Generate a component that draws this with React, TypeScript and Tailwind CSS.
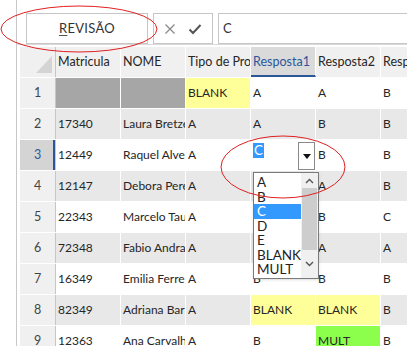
import React from "react";

type Cell = { v: string; bg?: string };

const rows: { n: number; cells: Cell[] }[] = [
  { n: 1, cells: [{ v: "", bg: "bg-[#a6a6a6]" }, { v: "", bg: "bg-[#a6a6a6]" }, { v: "BLANK", bg: "bg-[#ffff99]" }, { v: "A" }, { v: "A" }, { v: "B" }] },
  { n: 2, cells: [{ v: "17340" }, { v: "Laura Bretzel" }, { v: "A" }, { v: "A" }, { v: "B" }, { v: "B" }] },
  { n: 3, cells: [{ v: "12449" }, { v: "Raquel Alves" }, { v: "A" }, { v: "" }, { v: "B" }, { v: "B" }] },
  { n: 4, cells: [{ v: "12147" }, { v: "Debora Pereira" }, { v: "A" }, { v: "A" }, { v: "A" }, { v: "B" }] },
  { n: 5, cells: [{ v: "22343" }, { v: "Marcelo Tauil" }, { v: "A" }, { v: "" }, { v: "B" }, { v: "C" }] },
  { n: 6, cells: [{ v: "72348" }, { v: "Fabio Andrade" }, { v: "A" }, { v: "" }, { v: "A" }, { v: "A" }] },
  { n: 7, cells: [{ v: "16349" }, { v: "Emilia Ferreira" }, { v: "A" }, { v: "B" }, { v: "B" }, { v: "B" }] },
  { n: 8, cells: [{ v: "82349" }, { v: "Adriana Bari" }, { v: "A" }, { v: "BLANK", bg: "bg-[#ffff99]" }, { v: "BLANK", bg: "bg-[#ffff99]" }, { v: "B" }] },
  { n: 9, cells: [{ v: "12363" }, { v: "Ana Carvalho" }, { v: "A" }, { v: "B" }, { v: "MULT", bg: "bg-[#8cff4d]" }, { v: "B" }] },
];

const headers = ["Matricula", "NOME", "Tipo de Prova", "Resposta1", "Resposta2", "Resposta3"];

function Dropdown() {
  const items = ["A", "B", "C", "D", "E", "BLANK", "MULT"];
  return (
    <div className="absolute left-[253px] top-[172px] w-[66px] h-[107px] bg-white border border-[#7a7a7a] flex shadow-sm">
      <div className="flex-1 flex flex-col pt-[2px]">
        {items.map((it) => (
          <div
            key={it}
            className={`h-[14.5px] leading-[14.5px] pl-[3px] text-[13.5px] ${it === "C" ? "bg-[#3399ff] text-white" : "text-[#222]"}`}
          >
            {it}
          </div>
        ))}
      </div>
      <div className="w-[17px] bg-[#f0f0f0] flex flex-col items-center">
        <div className="h-[15px] flex items-center justify-center">
          <svg width="9" height="6" viewBox="0 0 9 6"><path d="M1 5 L4.5 1.5 L8 5" fill="none" stroke="#555" strokeWidth="1.4" /></svg>
        </div>
        <div className="w-[15px] h-[62px] bg-[#cdcdcd]" />
        <div className="flex-1 flex items-center justify-center">
          <svg width="9" height="6" viewBox="0 0 9 6"><path d="M1 1 L4.5 4.5 L8 1" fill="none" stroke="#555" strokeWidth="1.4" /></svg>
        </div>
      </div>
    </div>
  );
}

export default function App() {
  return (
    <div className="relative w-[407px] h-[346px] overflow-hidden bg-white flex font-['Lato',sans-serif] text-[12px] text-[#262626]">
      <div className="w-[17px] shrink-0 bg-white border-r border-[#c8c8c8]" />
      <div className="flex-1 flex flex-col">
        {/* formula bar */}
        <div className="h-[48px] pt-[13px] pl-[9px] flex gap-[5px] border-b border-[#dadada]">
          <div className="w-[122px] h-[31px] border border-[#c6c6c6] flex items-center justify-center text-[13px] text-[#333] tracking-[0.3px]">
            <span className="underline underline-offset-2 decoration-[#555]">R</span>EVISÃO
          </div>
          <div className="w-[60px] h-[31px] border border-[#c6c6c6] flex items-center justify-around px-[4px]">
            <svg width="12" height="12" viewBox="0 0 12 12"><path d="M1.5 1.5 L10.5 10.5 M10.5 1.5 L1.5 10.5" stroke="#8a8a8a" strokeWidth="1.3" /></svg>
            <svg width="14" height="12" viewBox="0 0 14 12"><path d="M1.5 6.5 L5 10 L12.5 2" fill="none" stroke="#555" strokeWidth="2" /></svg>
          </div>
          <div className="flex-1 h-[31px] border border-[#c6c6c6] border-r-0 flex items-center pl-[4px] text-[13px] text-[#333]">C</div>
        </div>
        {/* grid */}
        <div className="pl-[3px] pt-[2px] flex flex-col bg-white">
          <div className="flex h-[30px]">
            <div className="w-[36px] shrink-0 bg-[#f0f0f0] border-r border-[#c6c6c6] relative">
              <svg className="absolute right-[3px] bottom-[4px]" width="16" height="17" viewBox="0 0 16 17"><path d="M16 0 L16 17 L0 17 Z" fill="#d4d4d4" /></svg>
            </div>
            {headers.map((h) => (
              <div
                key={h}
                className={`w-[65px] shrink-0 overflow-hidden whitespace-nowrap pl-[2px] pt-[6px] text-[12.5px] border-r border-white ${h === "Resposta1" ? "bg-[#dadada] text-[#2b579a] border-b-2 border-b-[#2b579a]" : "bg-[#f0f0f0]"}`}
              >
                {h}
              </div>
            ))}
          </div>
          {rows.map((r) => {
            const sel = r.n === 3;
            const band = r.n % 2 === 0 ? "bg-[#e8e8e8]" : "bg-white";
            return (
              <div key={r.n} className="flex h-[31px] border-t border-white">
                <div
                  className={`w-[36px] shrink-0 border-r border-[#c6c6c6] flex items-center justify-center relative text-[12.5px] ${sel ? "bg-[#d4d4d4] text-[#2b579a]" : "bg-[#f0f0f0] text-[#444]"}`}
                >
                  {r.n}
                  {sel && <div className="absolute right-0 top-0 bottom-0 w-[2px] bg-[#2b579a]" />}
                </div>
                {r.cells.map((c, i) => (
                  <div
                    key={i}
                    className={`w-[65px] shrink-0 overflow-hidden whitespace-nowrap pl-[2px] flex items-center border-r border-white relative ${c.bg ?? band}`}
                  >
                    {sel && i === 3 ? (
                      <>
                        <span className="absolute left-[2px] top-[3px] bg-[#3399ff] text-white text-[13.5px] px-[1px] leading-[15px]">C</span>
                        <div className="absolute right-0 top-[2px] w-[17px] h-[28px] border border-[#8a8a8a] bg-white flex items-center justify-center">
                          <svg width="8" height="5" viewBox="0 0 8 5"><path d="M0 0 L8 0 L4 5 Z" fill="#111" /></svg>
                        </div>
                      </>
                    ) : (
                      c.v
                    )}
                  </div>
                ))}
              </div>
            );
          })}
        </div>
      </div>
      <Dropdown />
      <svg className="absolute inset-0 pointer-events-none" width="407" height="346">
        <ellipse cx="79" cy="29" rx="78" ry="23" fill="none" stroke="#e02020" strokeWidth="1" />
        <ellipse cx="283" cy="167" rx="62" ry="31" fill="none" stroke="#e02020" strokeWidth="1" />
      </svg>
    </div>
  );
}
